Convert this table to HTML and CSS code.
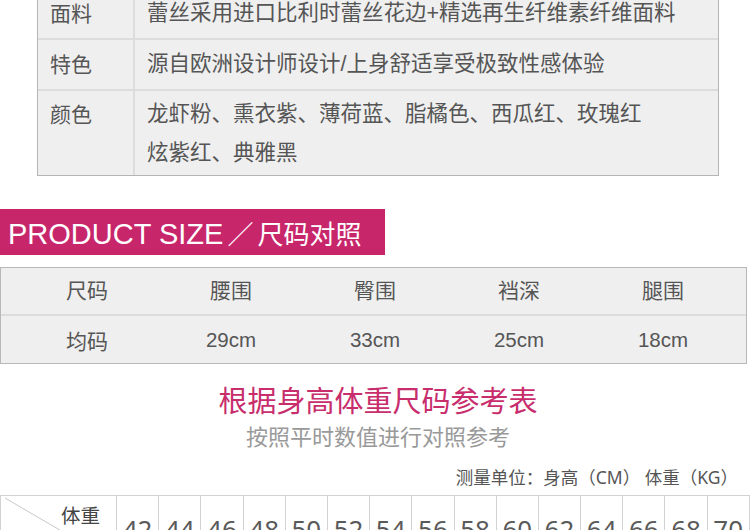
FILE: index.html
```html
<!DOCTYPE html>
<html lang="zh-CN">
  <head>
    <meta charset="UTF-8" />
    <meta name="viewport" content="width=device-width, initial-scale=1.0" />
    <title>尺码对照</title>
    <link rel="stylesheet" href="styles.css">
  </head>
  <body>
    <div class="page">
      <div class="info">
        <div class="info-row">
          <div class="info-label">面料</div>
          <div class="info-value">蕾丝采用进口比利时蕾丝花边+精选再生纤维素纤维面料</div>
        </div>
        <div class="info-row">
          <div class="info-label">特色</div>
          <div class="info-value">源自欧洲设计师设计/上身舒适享受极致性感体验</div>
        </div>
        <div class="info-row info-tall">
          <div class="info-label">颜色</div>
          <div class="info-value">龙虾粉、熏衣紫、薄荷蓝、脂橘色、西瓜红、玫瑰红<br />炫紫红、典雅黑</div>
        </div>
      </div>

      <div class="banner">
        <h2>PRODUCT SIZE<span class="slash">／</span><span class="cn">尺码对照</span></h2>
      </div>

      <div class="size">
        <div class="size-row size-head">
          <span>尺码</span>
          <span>腰围</span>
          <span>臀围</span>
          <span>裆深</span>
          <span>腿围</span>
        </div>
        <div class="size-row">
          <span>均码</span>
          <span class="num">29cm</span>
          <span class="num">33cm</span>
          <span class="num">25cm</span>
          <span class="num">18cm</span>
        </div>
      </div>

      <div class="ref-title">
        <h3>根据身高体重尺码参考表</h3>
        <p>按照平时数值进行对照参考</p>
      </div>

      <p class="unit">测量单位：身高（CM） 体重（KG）</p>

      <div class="chart">
        <div class="corner">
          <svg class="diag" viewBox="0 0 117 70" preserveAspectRatio="none">
            <line x1="4" y1="2" x2="117" y2="68" stroke="#c8c8c8" stroke-width="1" />
          </svg>
          <span>体重</span>
        </div>
        <div class="w">42</div>
        <div class="w">44</div>
        <div class="w">46</div>
        <div class="w">48</div>
        <div class="w">50</div>
        <div class="w">52</div>
        <div class="w">54</div>
        <div class="w">56</div>
        <div class="w">58</div>
        <div class="w">60</div>
        <div class="w">62</div>
        <div class="w">64</div>
        <div class="w">66</div>
        <div class="w">68</div>
        <div class="w">70</div>
      </div>
    </div>
  </body>
</html>
```

FILE: styles.css
```css
* {
  box-sizing: border-box;
  margin: 0;
  padding: 0;
  font-family: "Liberation Sans", "Noto Sans CJK SC", sans-serif;
}
body {
  background-color: #fff;
  width: 750px;
  height: 530px;
  overflow: hidden;
}
.page {
  display: flex;
  flex-direction: column;
}

/* product info table */
.info {
  margin: -12px 0 0 37px;
  width: 682px;
  border: 1px solid #b5b5b5;
  background-color: #efefef;
}
.info-row {
  display: flex;
  border-top: 2px solid #dcdcdc;
}
.info-row:first-child {
  border-top: none;
}
.info-label {
  width: 97px;
  padding: 5px 0 5px 12px;
  border-right: 2px solid #dcdcdc;
  font-size: 21px;
  line-height: 39px;
  color: #555;
}
.info-value {
  flex: 1;
  padding: 5px 0 5px 12px;
  font-size: 21.5px;
  line-height: 39px;
  color: #555;
}
.info-tall .info-label,
.info-tall .info-value {
  padding: 4px 0 2px 12px;
}

/* pink banner */
.banner {
  margin-top: 33px;
  width: 385px;
  height: 46px;
  background-color: #c8266b;
  display: flex;
  align-items: center;
  padding-left: 8px;
}
.banner h2 {
  font-size: 29px;
  font-weight: 400;
  color: #fff;
  white-space: nowrap;
}
.banner .slash {
  font-size: 26px;
  margin-left: 4px;
}
.banner .cn {
  font-size: 26px;
  margin-left: 4px;
}

/* size table */
.size {
  margin-top: 12px;
  width: 747px;
  border: 1px solid #b8b8b8;
  background-color: #efefef;
}
.size-row {
  display: grid;
  grid-template-columns: repeat(5, 144px);
  padding: 0 11px 0 14px;
  height: 47px;
  align-items: center;
  text-align: center;
  font-size: 21px;
  color: #555;
}
.size-head {
  height: 48px;
  padding-bottom: 4px;
  border-bottom: 2px solid #dcdcdc;
}
.size-row .num {
  font-size: 20.5px;
}

/* reference chart titles */
.ref-title {
  margin-top: 20px;
  text-align: center;
  padding-left: 6px;
}
.ref-title h3 {
  font-size: 29px;
  font-weight: 400;
  line-height: 36px;
  color: #c82d6c;
}
.ref-title p {
  margin-top: 3px;
  font-size: 22px;
  line-height: 30px;
  color: #999;
}
.unit {
  margin-top: 12px;
  text-align: right;
  padding-right: 12px;
  font-size: 17.5px;
  line-height: 24px;
  color: #555;
  font-family: "Noto Sans", "Noto Sans CJK SC", sans-serif;
}

/* height / weight chart */
.chart {
  margin-top: 6px;
  display: grid;
  grid-template-columns: 117px repeat(15, 42.2px);
  border-top: 1px solid #d2d2d2;
  height: 70px;
}
.corner {
  position: relative;
  border-left: 1px solid #d2d2d2;
  border-right: 1px solid #d2d2d2;
  padding: 5px 16px 0 0;
  text-align: right;
  font-size: 19.5px;
  line-height: 30px;
  color: #444;
}
.corner span {
  position: relative;
}
.diag {
  position: absolute;
  left: 0;
  top: 0;
  width: 117px;
  height: 70px;
}
.w {
  border-right: 1px solid #d2d2d2;
  display: flex;
  justify-content: center;
  padding-top: 18px;
  font-size: 26px;
  line-height: 30px;
  color: #5a5a5a;
  font-family: "Noto Sans", sans-serif;
}
```
